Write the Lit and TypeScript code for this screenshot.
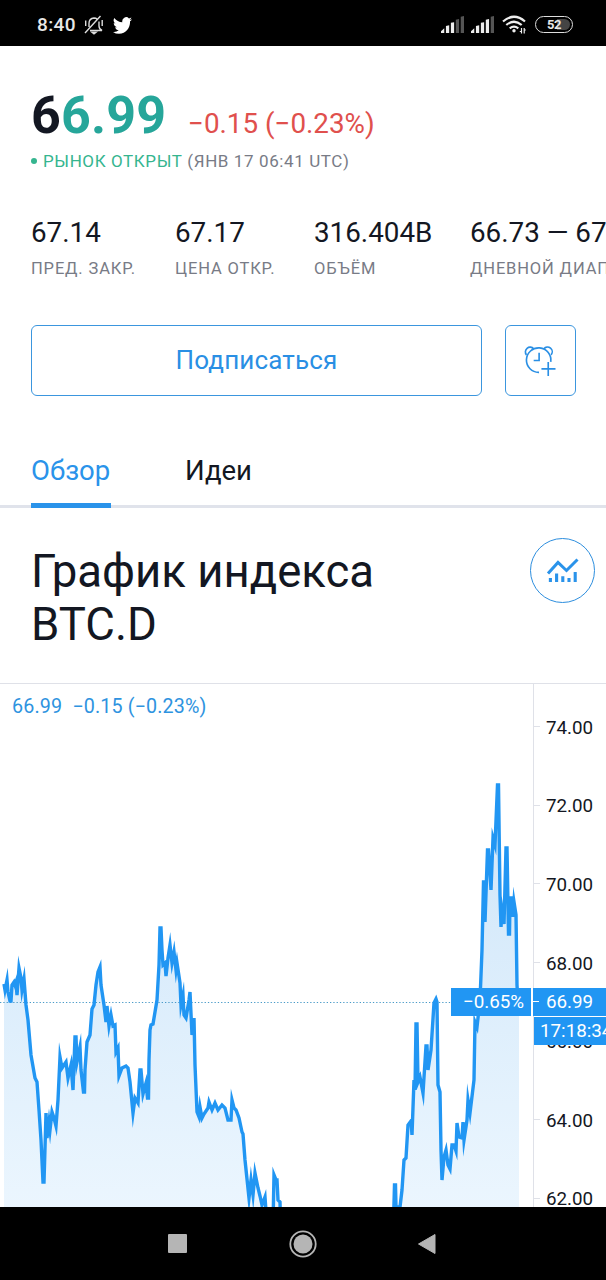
import { LitElement, html, svg, css } from "lit";
import { customElement } from "lit/decorators.js";

const SERIES: number[][] = [
  [4,984],[5,990],[7,980],[8,992],[10,1001],[11,1001],[12,985],[14,982],[15,985],[16,982],[17,995],[19,968],[21,978],[22,990],[24,979],[26,1005],[28,1020],[31,1055],[35,1078],[37,1082],[39,1110],[41,1140],[43,1182],[44,1182],[45,1148],[46,1113],[47,1138],[49,1122],[50,1130],[52,1112],[54,1118],[56,1126],[58,1100],[60,1057],[62,1068],[66,1062],[68,1078],[71,1065],[73,1090],[75,1037],[76,1037],[77,1062],[80,1047],[81,1070],[83.5,1092],[84.5,1092],[85,1070],[87,1042],[90,1035],[92,1009],[94,1005],[96,985],[98,972],[100,967],[101,985],[104,1005],[106,1022],[107,1006],[109,1026],[111,1015],[113,1026],[115,1025],[116,1052],[118,1048],[119,1076],[122,1068],[126,1066],[128,1068],[130,1082],[133,1113],[135,1098],[138,1103],[140,1070],[141,1070],[143,1094],[146,1083],[147.5,1098],[148.5,1098],[149,1060],[150,1030],[151,1025],[153,1024],[155,1012],[157,1000],[159,965],[160,928],[161,928],[162,950],[163,965],[165,963],[166,976],[168,958],[170,945],[172,963],[174,952],[176,970],[177,963],[180,983],[181,1005],[183,995],[184,1015],[186,1018],[189,1000],[190,992],[192,1035],[194,1018],[195,1065],[197,1112],[199,1117],[200,1107],[202,1118],[204,1114],[208,1108],[209,1102],[212,1110],[215,1103],[218,1110],[222,1105],[225,1108],[228,1120],[231,1120],[232,1100],[234,1108],[236,1110],[239,1118],[242,1132],[243,1134],[245,1160],[249,1198],[251,1180],[253,1195],[255,1173],[258,1188],[260,1196],[262,1205],[265,1197],[267,1225],[273,1225],[274,1175],[276,1180],[277,1180],[278,1200],[280,1202],[281,1240],[393,1240],[394.5,1185],[395.5,1185],[396,1207],[400,1207],[402,1190],[404,1160],[406,1158],[408,1125],[411,1121],[412,1135],[414,1080],[415,1090],[416,1024],[417,1024],[418,1082],[420,1077],[423,1093],[426,1046],[427,1046],[428,1070],[431,1050],[434,1003],[436,999],[437,1002],[438,1085],[440,1092],[441,1150],[442,1180],[444,1157],[446,1150],[448,1165],[450,1169],[452,1145],[454,1145],[456,1151],[457,1123],[459,1137],[462,1138],[463,1122],[464,1140],[467,1120],[468,1100],[470,1113],[474,1080],[475,1022],[477,1027],[480,1000],[482,950],[483.5,882],[484.5,882],[485,922],[487.5,850],[488.5,850],[491,890],[493,838],[495,845],[497.5,785],[498.5,785],[500,895],[501,927],[502,910],[504,924],[506,848],[507,848],[508.5,934],[509.5,934],[510,898],[512,898],[513,917],[514,902],[516,915],[517,985],[518,1002],
];
const TOP = 684;
const LINE = SERIES.map(([x, y]) => `${x},${y - TOP}`).join(" ");
const AREA = `4,523 ${LINE} 519,318 519,523`;

const STATS = [
  ["67.14", "ПРЕД. ЗАКР.", "s1"],
  ["67.17", "ЦЕНА ОТКР.", "s2"],
  ["316.404B", "ОБЪЁМ", "s3"],
  ["66.73 — 67.27", "ДНЕВНОЙ ДИАПАЗОН", "s4"],
];
const SCALE = ["74.00", "72.00", "70.00", "68.00", "66.00", "64.00", "62.00"];

@customElement("status-bar")
class StatusBar extends LitElement {
  static styles = css`
    :host { display: flex; height: 46px; background: #000; color: #e8e8e8; align-items: center; padding: 4px 33px 0 37px; box-sizing: border-box; }
    .clock { font-size: 19px; font-weight: 500; letter-spacing: .35px; width: 47px; line-height: 42px; }
    .bell { width: 21px; height: 20px; }
    .bird { width: 19px; height: 17px; margin-left: 8px; }
    .fill { flex: 1; }
    .sig { width: 23px; height: 17px; margin: 0 7px 1px 0; }
    .wifi { width: 24px; height: 20px; margin: 0 9px 0 1px; }
    .battery { display: flex; align-items: center; justify-content: center; width: 38px; height: 17px; box-sizing: border-box; border: 1.5px solid #ddd; border-radius: 9px; font-size: 13px; font-weight: 700; letter-spacing: -.4px; background: #000; position: relative; margin-bottom: 1px; }
    .battery::before { content: ""; position: absolute; right: 2px; top: 2px; width: 13px; height: 11px; border-radius: 0 6px 6px 0; background: #444; }
    .battery span { position: relative; }
    svg { display: block; flex: none; }
  `;
  bars(on: number) {
    return svg`${[0, 1, 2, 3, 4].map((i) => svg`<path d="M${i * 5} 17V${i ? 13 - i * 3.1 : 15.3}L${i * 5 + 3.3} ${12.2 - i * 3.05}V17Z" fill=${i < on ? "#eee" : "#555"} />`)}`;
  }
  render() {
    return html`
      <span class="clock">8:40</span>
      <svg class="bell" viewBox="0 0 21 20" fill="none" stroke="#ddd" stroke-width="1.4">
        <path d="M1 18L16.5 1M5 12V8.5Q5 3.5 10 3Q12 3 13 4M15 6.5V11Q15 14 18 15.5H6M1.7 5.5V11M18.2 5V11" />
        <path d="M8 17.3H12L10 18.8Z" fill="#ddd" />
      </svg>
      <svg class="bird" viewBox="0 2 24 20" fill="#fff" preserveAspectRatio="none">
        <path d="M23.95 4.57a10 10 0 0 1-2.82.78 4.96 4.96 0 0 0 2.16-2.73c-.95.56-2 .96-3.13 1.19a4.92 4.92 0 0 0-8.38 4.48C7.69 8.1 4.07 6.13 1.64 3.16a4.9 4.9 0 0 0 1.52 6.57 4.9 4.9 0 0 1-2.23-.61v.06c0 2.38 1.7 4.37 3.95 4.82a5 5 0 0 1-2.21.09 4.94 4.94 0 0 0 4.6 3.42A9.87 9.87 0 0 1 0 19.54a14 14 0 0 0 7.55 2.21c9.05 0 14-7.5 14-13.98 0-.21 0-.42-.02-.63a10 10 0 0 0 2.46-2.55z" />
      </svg>
      <span class="fill"></span>
      <svg class="sig" viewBox="0 0 23.3 17">${this.bars(3)}</svg>
      <svg class="sig" viewBox="0 0 23.3 17">${this.bars(4)}</svg>
      <svg class="wifi" viewBox="0 0 24 20" fill="none" stroke="#eee" stroke-width="2.2">
        <path d="M1 6.5Q12 -3 23 6.5M4.3 10Q12 3.5 19.7 10M7.7 13.4Q12 10 16.3 13.4" />
        <circle cx="12" cy="15.8" r="1.7" fill="#eee" stroke="none" />
        <path d="M19.5 13V18.5M22.2 13V18.5M17.8 16.5H19.5M22.2 15H23.8" stroke-width="1.2" />
      </svg>
      <span class="battery"><span>52</span></span>`;
  }
}

@customElement("symbol-header")
class SymbolHeader extends LitElement {
  static styles = css`
    :host { display: block; padding: 46px 0 0 31px; }
    .quote { display: flex; align-items: baseline; height: 59px; line-height: 48px; }
    .price { font-size: 52px; font-weight: 700; color: #131722; width: 157px; letter-spacing: .15px; }
    .price span { color: #26a69a; }
    .change { font-size: 27.8px; color: #e0504d; white-space: nowrap; }
    .status { display: flex; align-items: center; height: 20px; font-size: 17px; letter-spacing: .6px; color: #787b86; white-space: pre; }
    .dot { width: 6px; height: 6px; border-radius: 50%; background: #35b58f; margin-right: 6px; }
    .open { color: #35b58f; }
    .stats { display: flex; margin-top: 45px; height: 109px; overflow: hidden; }
    .stat { flex: none; white-space: nowrap; }
    .s1 { width: 144px; } .s2 { width: 139px; } .s3 { width: 156px; }
    .value { font-size: 27.8px; line-height: 34px; color: #131722; }
    .label { font-size: 16.5px; line-height: 20px; margin-top: 9px; color: #787b86; letter-spacing: .85px; }
    .actions { display: flex; gap: 23px; }
    .btn { display: flex; align-items: center; justify-content: center; box-sizing: border-box; height: 71px; border: 1.5px solid #3b96de; border-radius: 6px; color: #2a8fe4; }
    .follow { width: 451px; font-size: 26px; letter-spacing: .15px; padding-bottom: 1px; }
    .alarm { width: 71px; padding: 0 2px 0 0; }
  `;
  render() {
    return html`
      <div class="quote">
        <div class="price">6<span>6.99</span></div>
        <div class="change">−0.15 (−0.23%)</div>
      </div>
      <div class="status"><i class="dot"></i><span class="open">РЫНОК ОТКРЫТ</span> (ЯНВ 17 06:41 UTC)</div>
      <div class="stats">
        ${STATS.map(([v, l, c]) => html`<div class="stat ${c}"><div class="value">${v}</div><div class="label">${l}</div></div>`)}
      </div>
      <div class="actions">
        <div class="btn follow">Подписаться</div>
        <div class="btn alarm">
          <svg width="33" height="33" viewBox="0 0 34 34" fill="none" stroke="#2a8fe4" stroke-width="1.7">
            <path d="M16.5 29.2A12.6 12.6 0 1 1 28.6 18.4M16.6 9V17H11M26 18.5V33M19 25.6H33.5" />
            <path d="M3.6 11.2A4.7 4.7 0 1 1 11 5M21.5 5A4.7 4.7 0 1 1 29 11.2" />
          </svg>
        </div>
      </div>`;
  }
}

@customElement("index-chart")
class IndexChart extends LitElement {
  static styles = css`
    :host { display: flex; position: relative; height: 523px; overflow: hidden; border-top: 1px solid #dfe1e8; }
    .plot { width: 533px; height: 523px; flex: none; }
    .axis { flex: 1; border-left: 1px solid #dfe1e8; padding-top: 4.5px; }
    .tick { display: flex; align-items: center; height: 78.6px; font-size: 18.8px; color: #131722; }
    .tick::before { content: ""; width: 6px; height: 1px; background: #dfe1e8; margin: -2px 6px 0 0; }
    .legend { position: absolute; left: 12px; top: 10px; font-size: 19.7px; line-height: 25px; color: #2e93e0; white-space: pre; letter-spacing: .15px; }
    .tag { position: absolute; background: #2196f3; color: #fff; font-size: 18.8px; line-height: 28px; height: 28px; box-sizing: border-box; white-space: nowrap; }
    .pct { left: 451px; top: 304px; width: 80px; padding-left: 12px; }
    .last { left: 533px; top: 304px; width: 73px; padding-left: 13px; }
    .last::before { content: ""; position: absolute; left: 0; top: 13px; width: 6px; height: 1px; background: #fff; }
    .timer { left: 534px; top: 332px; width: 90px; height: 29px; line-height: 29px; padding-left: 6px; border-top: 1px solid #fff; }
  `;
  render() {
    return html`
      <svg class="plot" viewBox="0 0 533 523">
        <defs><linearGradient id="shade" gradientUnits="userSpaceOnUse" x1="0" y1="100" x2="0" y2="522">
          <stop offset="0" stop-color="#2188e0" stop-opacity=".22" /><stop offset="1" stop-color="#2196f3" stop-opacity=".09" />
        </linearGradient></defs>
        <polygon points=${AREA} fill="url(#shade)" />
        <path d="M0 318.5H451" stroke="#4a9bc8" stroke-width="1" stroke-dasharray="1.3 2" />
        <polyline points=${LINE} fill="none" stroke="#2196f3" stroke-width="3.4" stroke-miterlimit="10" />
      </svg>
      <div class="axis">${SCALE.map((p) => html`<div class="tick">${p}</div>`)}</div>
      <div class="legend">66.99  −0.15 (−0.23%)</div>
      <div class="tag pct">−0.65%</div>
      <div class="tag last">66.99</div>
      <div class="tag timer">17:18:34</div>`;
  }
}

@customElement("app-root")
class AppRoot extends LitElement {
  static styles = css`
    :host { display: flex; flex-direction: column; width: 606px; height: 1280px; overflow: hidden; background: #fff; font-family: Roboto, "Noto Sans", sans-serif; }
    symbol-header { height: 351px; box-sizing: border-box; }
    .tabs { display: flex; gap: 74px; height: 60px; margin-top: 48px; padding-left: 31px; border-bottom: 3px solid #e0e3eb; font-size: 27.5px; line-height: 52px; color: #131722; }
    .tab { height: 60px; }
    .active { width: 80px; color: #2a93ea; box-shadow: inset 0 -2px #2a93ea, 0 3px #2a93ea; }
    .heading { display: flex; justify-content: space-between; height: 175px; padding: 37px 11px 0 31px; box-sizing: border-box; }
    h2 { margin: 0; font-size: 45.5px; font-weight: 400; line-height: 53px; color: #131722; width: 400px; }
    .round { display: flex; align-items: center; justify-content: center; box-sizing: border-box; width: 65px; height: 65px; margin-top: -7px; padding-bottom: 2px; border: 1.5px solid #2d8ede; border-radius: 50%; }
    nav { display: flex; align-items: center; justify-content: space-between; flex: 1; background: #000; padding: 0 170px 0 168px; }
    .home { margin-left: 2px; }
    status-bar, symbol-header, index-chart, .tabs, .heading { flex: none; }
  `;
  render() {
    return html`
      <status-bar></status-bar>
      <symbol-header></symbol-header>
      <div class="tabs"><div class="tab active">Обзор</div><div class="tab">Идеи</div></div>
      <div class="heading">
        <h2>График индекса BTC.D</h2>
        <div class="round">
          <svg width="33" height="28" viewBox="0 0 33 28" fill="none" stroke="#2a93ea">
            <path d="M2 17.5L12 6.5L20.5 14.5L31.5 3.5" stroke-width="3" />
            <path d="M4.4 26V22M10.6 26V17.5M16.8 26V20.3M23 26V22M29.2 26V16" stroke-width="3.1" />
          </svg>
        </div>
      </div>
      <index-chart></index-chart>
      <nav>
        <svg width="19" height="19"><rect width="19" height="19" rx="1" fill="#b5b5b5" /></svg>
        <svg class="home" width="28" height="28"><circle cx="14" cy="14" r="12.7" fill="none" stroke="#b5b5b5" stroke-width="1.8" /><circle cx="14" cy="14" r="9.5" fill="#b5b5b5" /></svg>
        <svg width="19" height="22"><path d="M18 1.5V20.5L1.5 11Z" fill="#b5b5b5" stroke="#b5b5b5" stroke-linejoin="round" /></svg>
      </nav>`;
  }
}
